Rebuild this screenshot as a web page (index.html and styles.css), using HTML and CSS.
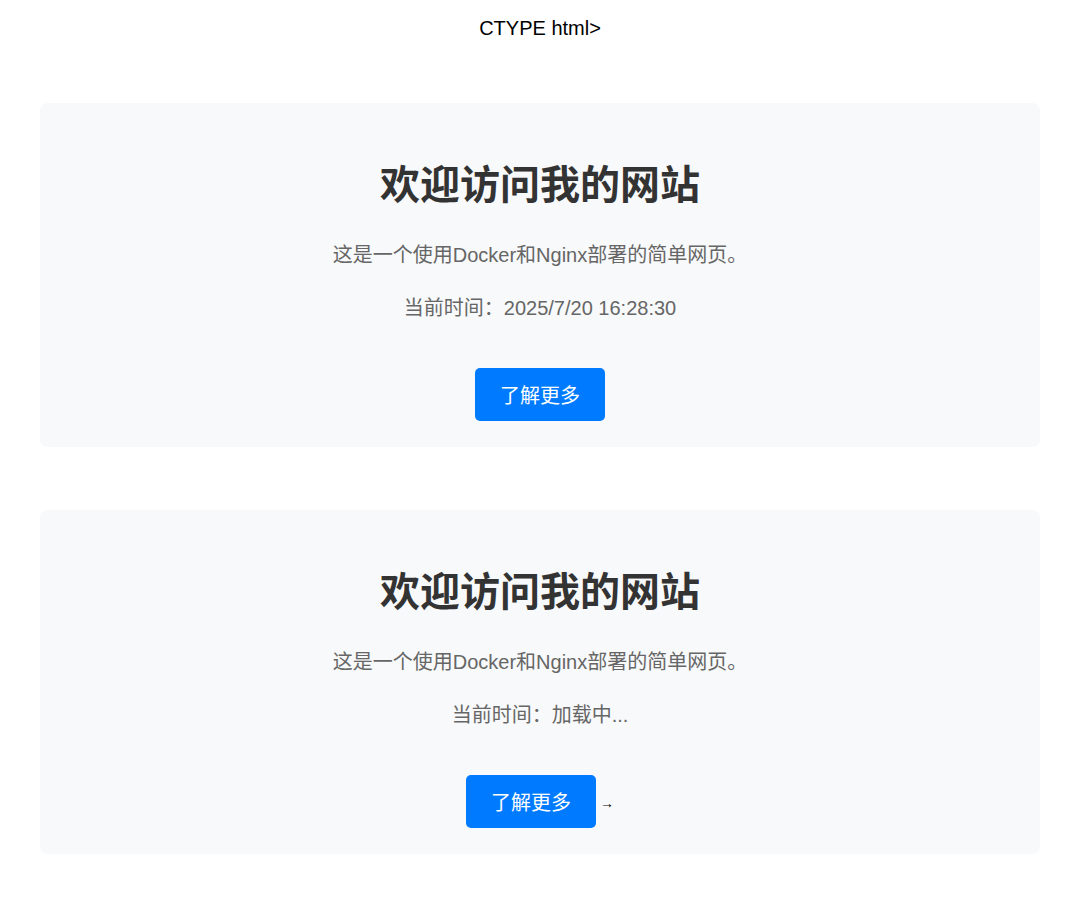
FILE: index.html
```html
<!DOCTYPE html>
<html lang="zh-CN">
<head>
<meta charset="utf-8">
<title>欢迎访问我的网站</title>
<link rel="stylesheet" href="styles.css">
</head>
<body>
<div class="doctype">CTYPE html&gt;</div>
<main class="page">
  <section class="card">
    <h1 class="title">欢迎访问我的网站</h1>
    <p class="text">这是一个使用Docker和Nginx部署的简单网页。</p>
    <p class="text">当前时间：2025/7/20 16:28:30</p>
    <div class="actions"><a class="btn" href="#">了解更多</a></div>
  </section>
  <section class="card">
    <h1 class="title">欢迎访问我的网站</h1>
    <p class="text">这是一个使用Docker和Nginx部署的简单网页。</p>
    <p class="text">当前时间：加载中...</p>
    <div class="actions"><a class="btn" href="#">了解更多</a><span class="arrow"> →</span></div>
  </section>
</main>
</body>
</html>
```

FILE: styles.css
```css
html, body {
  margin: 0;
  padding: 0;
  background: #ffffff;
}

body {
  font-family: "Liberation Sans", Arial, "Noto Sans CJK SC", sans-serif;
  font-size: 20px;
  color: #000;
  text-align: center;
}

.doctype {
  width: 1080px;
  padding-top: 17px;
  line-height: 23px;
  height: 23px;
}

.page {
  width: 1000px;
  margin: 63px 0 0 40px;
  display: flex;
  flex-direction: column;
  gap: 63px;
}

.card {
  background: #f8f9fa;
  border-radius: 8px;
  padding: 58px 20px 26px;
}

.title {
  margin: 0;
  font-size: 40px;
  line-height: 48px;
  font-weight: bold;
  color: #333333;
}

.text {
  margin: 0;
  font-size: 20px;
  line-height: 30px;
  color: #666666;
}

.title + .text {
  margin-top: 31px;
}

.text + .text {
  margin-top: 23px;
}

.actions {
  margin-top: 45px;
  line-height: 53px;
  height: 53px;
}

.btn {
  display: inline-block;
  vertical-align: top;
  background: #007bff;
  color: #ffffff;
  text-decoration: none;
  font-size: 20px;
  line-height: 23px;
  padding: 17px 25px 13px;
  border-radius: 5px;
}

.arrow {
  font-size: 14px;
  color: #000;
}
```
